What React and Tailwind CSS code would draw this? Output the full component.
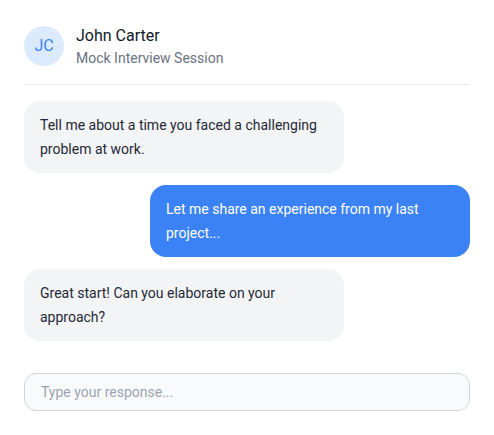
export default function App() {
  const messages = [
    { id: 1, from: "them", text: "Tell me about a time you faced a challenging problem at work." },
    { id: 2, from: "me", text: "Let me share an experience from my last project..." },
    { id: 3, from: "them", text: "Great start! Can you elaborate on your approach?" },
  ]

  return (
    <div className="flex min-h-screen flex-col bg-white p-6" style={{ fontFamily: "Roboto, sans-serif" }}>
      {/* header */}
      <div className="flex items-center gap-3 border-b border-[#e5e7eb] pb-4">
        <div className="grid h-10 w-10 place-items-center rounded-full bg-[#dbeafe] text-base text-[#3b82f6]">JC</div>
        <div>
          <div className="text-base text-[#111827]">John Carter</div>
          <div className="text-sm text-[#6b7280]">Mock Interview Session</div>
        </div>
      </div>

      {/* messages */}
      <div className="mt-4 flex flex-col gap-3">
        {messages.map((m) => (
          <div key={m.id} className={`flex ${m.from === "me" ? "justify-end" : "justify-start"}`}>
            <div
              className={`w-80 rounded-2xl px-4 py-3 text-sm leading-6 ${
                m.from === "me" ? "bg-[#3b82f6] text-white" : "bg-[#f3f4f6] text-[#1f2937]"
              }`}
            >
              {m.text}
            </div>
          </div>
        ))}
      </div>

      {/* input */}
      <div className="mt-8">
        <input
          placeholder="Type your response..."
          className="w-full rounded-xl border border-[#d1d5db] bg-[#f9fafb] px-4 py-2 text-sm text-[#1f2937] placeholder:text-[#9ca3af] focus:outline-none"
        />
      </div>
    </div>
  )
}
